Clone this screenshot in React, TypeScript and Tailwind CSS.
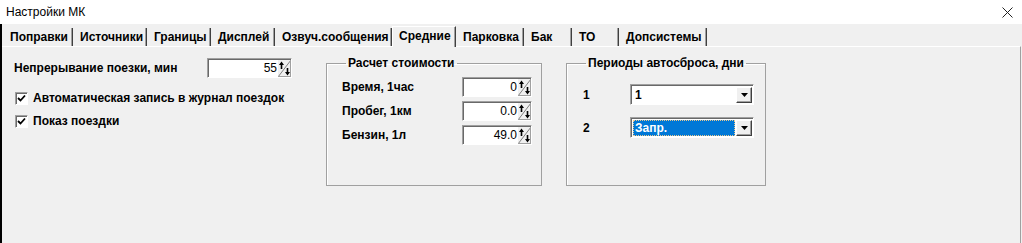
import React from "react";

const tabs = [
  { label: "Поправки", w: "w-[70px]" },
  { label: "Источники", w: "w-[74px]" },
  { label: "Границы", w: "w-[64px]" },
  { label: "Дисплей", w: "w-[64px]" },
  { label: "Озвуч.сообщения", w: "w-[117px]" },
  { label: "Средние", w: "w-[64px]", active: true },
  { label: "Парковка", w: "w-[68px]" },
  { label: "Бак", w: "w-[48px]" },
  { label: "ТО", w: "w-[47px]" },
  { label: "Допсистемы", w: "w-[88px]" },
];

function SpinArrows() {
  return (
    <svg width="13" height="17" viewBox="0 0 13 17" className="shrink-0">
      <rect x="0" y="0" width="13" height="17" fill="#f0f0f0" />
      <line x1="0" y1="17" x2="13" y2="0" stroke="#808080" strokeWidth="1" />
      <line x1="3.5" y1="3" x2="3.5" y2="9" stroke="#000" strokeWidth="1.6" />
      <path d="M1 5 L3.5 1.5 L6 5 Z" fill="#000" />
      <line x1="9.5" y1="8" x2="9.5" y2="14" stroke="#000" strokeWidth="1.6" />
      <path d="M7 12 L9.5 15.5 L12 12 Z" fill="#000" />
      <line x1="12.5" y1="0" x2="12.5" y2="17" stroke="#a0a0a0" />
      <line x1="0" y1="16.5" x2="13" y2="16.5" stroke="#a0a0a0" />
    </svg>
  );
}

function Spin({ value, w }: { value: string; w: string }) {
  return (
    <div
      className={`flex ${w} h-[20px] bg-white border border-t-[#a0a0a0] border-l-[#a0a0a0] border-r-white border-b-white shadow-[inset_1px_1px_0_#696969]`}
    >
      <div className="flex-1 text-right pr-[1px] pt-[1px] text-[12px] leading-[16px]">{value}</div>
      <div className="pt-[1px]">
        <SpinArrows />
      </div>
    </div>
  );
}

function Combo({ value, selected }: { value: string; selected?: boolean }) {
  return (
    <div className="flex w-[124px] h-[21px] bg-white border border-t-[#a0a0a0] border-l-[#a0a0a0] border-r-white border-b-white shadow-[inset_1px_1px_0_#696969] pl-[2px] pt-[2px] pr-[1px] pb-[1px]">
      <div
        className={
          selected
            ? "flex-1 mr-[1px] bg-[#0078d7] text-white border border-dotted border-[#e8c890] text-[12px] font-bold leading-[14px] pl-[1px]"
            : "flex-1 mr-[1px] text-[12px] font-bold leading-[16px] pl-[2px]"
        }
      >
        {value}
      </div>
      <div className="w-[16px] bg-[#f0f0f0] border border-t-white border-l-white border-r-[#404040] border-b-[#404040] shadow-[inset_-1px_-1px_0_#a0a0a0] flex items-center justify-center">
        <svg width="7" height="4" viewBox="0 0 7 4">
          <path d="M0 0 L7 0 L3.5 4 Z" fill="#000" />
        </svg>
      </div>
    </div>
  );
}

function Check({ label }: { label: string }) {
  return (
    <div className="flex items-center h-[16px]">
      <div className="ml-[1px] w-[13px] h-[13px] bg-white border border-t-[#a0a0a0] border-l-[#a0a0a0] border-r-white border-b-white shadow-[inset_1px_1px_0_#696969] flex items-center justify-center">
        <svg width="9" height="9" viewBox="0 0 9 9">
          <path d="M1 4 L3.5 6.5 L8 1.5" stroke="#000" strokeWidth="1.8" fill="none" />
        </svg>
      </div>
      <span className="ml-[5px] text-[12px] font-bold">{label}</span>
    </div>
  );
}

export default function App() {
  return (
    <div className="w-[1022px] h-[243px] flex flex-col bg-[#f0f0f0] overflow-hidden font-['Liberation_Sans',Arial,sans-serif] text-black">
      <div className="h-[24px] shrink-0 bg-white flex items-center justify-between pl-[6px] pr-[9px]">
        <span className="text-[12px]">Настройки МК</span>
        <svg width="11" height="11" viewBox="0 0 11 11">
          <path d="M0.5 0.5 L10.5 10.5 M10.5 0.5 L0.5 10.5" stroke="#222" strokeWidth="1" />
        </svg>
      </div>

      <div className="flex-1 flex flex-col border-l-2 border-black mr-[1px]">
        <div className="h-[22px] shrink-0 flex items-end pl-[1px]">
          {tabs.map((t) =>
            t.active ? (
              <div
                key={t.label}
                className={`${t.w} h-[21px] -mb-[1px] relative z-10 bg-[#f0f0f0] border-l border-t border-white border-r border-r-[#404040] shadow-[inset_-1px_0_0_#a0a0a0] pl-[6px] pb-[3px] flex items-center text-[12px] font-bold`}
              >
                {t.label}
              </div>
            ) : (
              <div
                key={t.label}
                className={`${t.w} h-[18px] border-r border-[#404040] shadow-[inset_-1px_0_0_#a0a0a0] pl-[7px] flex items-center text-[12px] font-bold`}
              >
                {t.label}
              </div>
            )
          )}
        </div>

        <div className="flex-1 flex items-start border-t border-white border-r border-r-[#a0a0a0] pl-[12px]">
          <div className="w-[278px] mt-[11px] flex flex-col">
            <div className="flex items-center h-[19px]">
              <span className="w-[193px] text-[12px] font-bold">Непрерывание поезки, мин</span>
              <Spin value="55" w="w-[85px]" />
            </div>
            <div className="mt-[13px] flex flex-col gap-[7px]">
              <Check label="Автоматическая запись в журнал поездок" />
              <Check label="Показ поездки" />
            </div>
          </div>

          <fieldset className="ml-[34px] mt-[9px] w-[216px] h-[130px] border border-[#a0a0a0] shadow-[inset_1px_1px_0_#fff] pl-[15px] pt-[7px]">
            <legend className="ml-[4px] px-[2px] text-[12px] font-bold leading-[14px]">Расчет стоимости</legend>
            <div className="flex flex-col gap-[4px]">
              {[
                ["Время, 1час", "0"],
                ["Пробег, 1км", "0.0"],
                ["Бензин, 1л", "49.0"],
              ].map(([l, v]) => (
                <div key={l} className="flex items-center">
                  <span className="w-[120px] text-[12px] font-bold">{l}</span>
                  <Spin value={v} w="w-[70px]" />
                </div>
              ))}
            </div>
          </fieldset>

          <fieldset className="ml-[24px] mt-[9px] w-[200px] h-[130px] border border-[#a0a0a0] shadow-[inset_1px_1px_0_#fff] pl-[16px] pt-[14px]">
            <legend className="ml-[3px] px-[2px] text-[12px] font-bold leading-[14px]">Периоды автосброса, дни</legend>
            <div className="flex flex-col gap-[12px]">
              <div className="flex items-center">
                <span className="w-[47px] text-[12px] font-bold">1</span>
                <Combo value="1" />
              </div>
              <div className="flex items-center">
                <span className="w-[47px] text-[12px] font-bold">2</span>
                <Combo value="Запр." selected />
              </div>
            </div>
          </fieldset>
        </div>
      </div>
    </div>
  );
}
